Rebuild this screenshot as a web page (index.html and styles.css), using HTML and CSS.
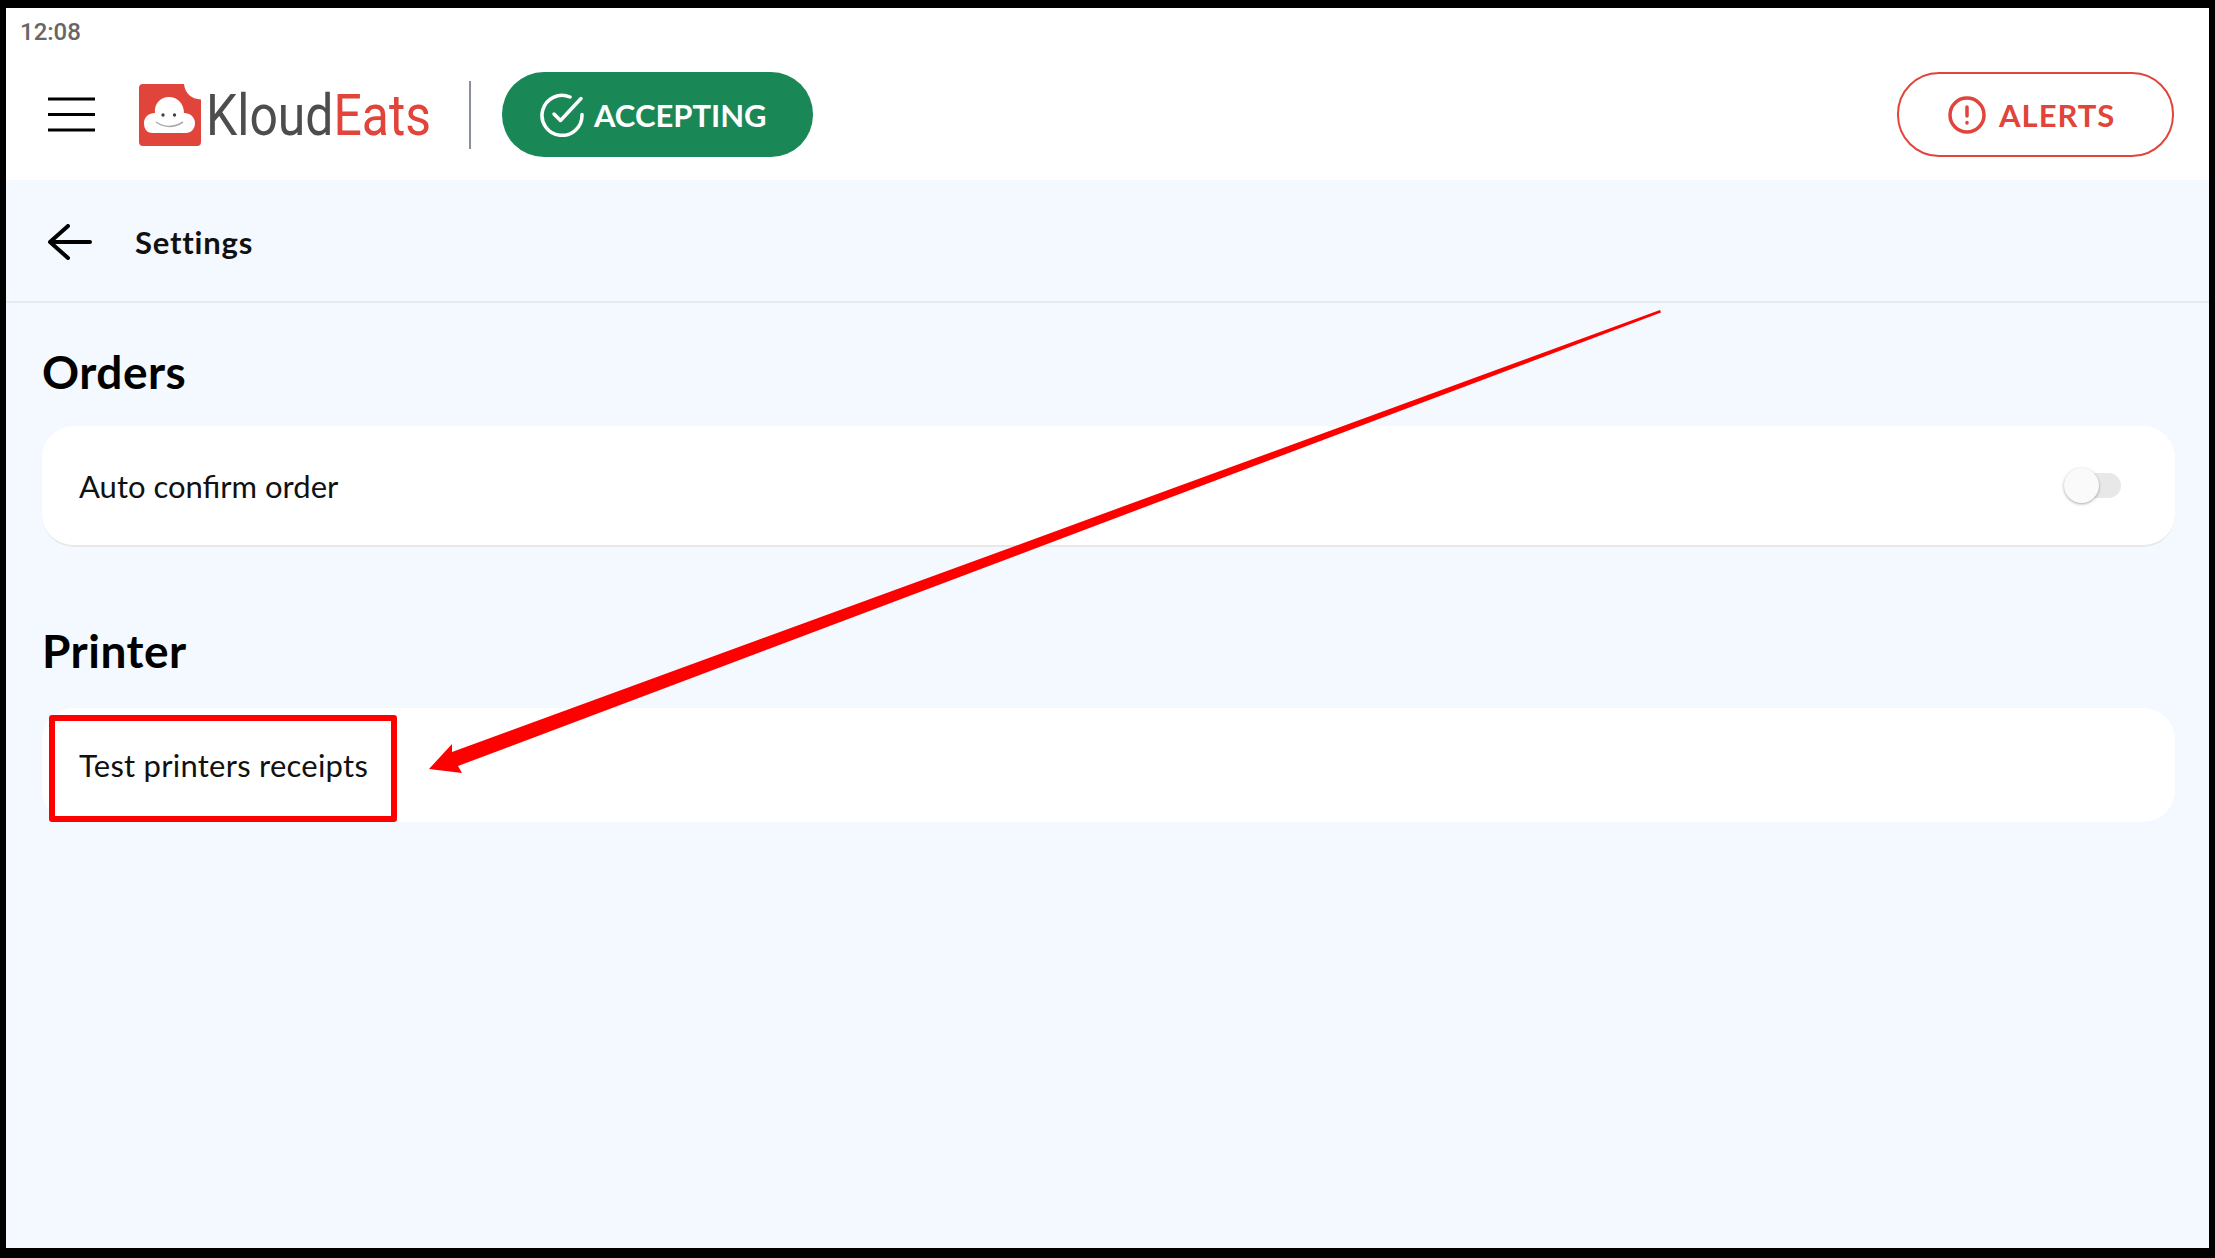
FILE: index.html
```html
<!DOCTYPE html>
<html>
	<head>
		<meta charset="utf-8">
		<title>KloudEats Settings</title>
		<link rel="stylesheet" href="styles.css">
	</head>
	<body>
		<div class="screen">
			<header class="top">
				<div class="status">12:08</div>
				<div class="toolbar">
					<svg class="menu" width="47" height="35" viewBox="0 0 47 35">
						<path d="M0 2H47M0 17.500H47M0 33H47" stroke="#000" stroke-width="3.200" fill="none"/>
					</svg>
					<svg class="logo" width="62" height="62" viewBox="0 0 62 62">
						<path d="M4 0H45C46 9 52 15 62 15.500V58Q62 62 58 62H4Q0 62 0 58V4Q0 0 4 0Z" fill="#e0443a"/>
						<path d="M14 49C7 49 5 44 5 39C5 33 10 29 16 29C15 20 21 13 30 13C39 13 45 20 45 29C51 29 56 33 56 39C56 45 52 49 47 49Z" fill="#fff"/>
						<circle cx="24" cy="31" r="1.700" fill="#444"/>
						<circle cx="35.500" cy="31" r="1.700" fill="#444"/>
						<path d="M17 38Q30 47 44 38" stroke="#aaa" stroke-width="1.500" fill="none"/>
					</svg>
					<div class="brand"><span class="brand-text">Kloud<span class="brand-red">Eats</span></span></div>
					<div class="divider"></div>
					<div class="pill accepting">
						<svg width="44" height="44" viewBox="0 0 44 44" fill="none" stroke="#fff" stroke-width="3.500" stroke-linecap="round" stroke-linejoin="round">
							<path d="M42 21.500A20 20 0 1 1 30 4"/>
							<path d="M14 21L20.500 27.500L41 5.500"/>
						</svg>
						<span>ACCEPTING</span>
					</div>
					<div class="pill alerts">
						<svg width="38" height="38" viewBox="0 0 38 38" fill="none" stroke="#e0443a" stroke-width="3.500" stroke-linecap="round">
							<circle cx="19" cy="19" r="17"/>
							<path d="M19 11V20"/>
							<path d="M19 26.500V27"/>
						</svg>
						<span>ALERTS</span>
					</div>
				</div>
			</header>

			<div class="subbar">
				<svg width="44" height="36" viewBox="0 0 44 36" fill="none" stroke="#000" stroke-width="4" stroke-linecap="round" stroke-linejoin="round">
					<path d="M42 18H2M20 2L2 18L20 34"/>
				</svg>
				<span class="subbar-title">Settings</span>
			</div>

			<main class="content">
				<h2 class="group-title">Orders</h2>
				<div class="card card-orders">
					<span>Auto confirm order</span>
					<div class="toggle"><div class="thumb"></div></div>
				</div>
				<h2 class="group-title group-printer">Printer</h2>
				<div class="card card-printer">
					<span>Test printers receipts</span>
				</div>
			</main>
		</div>

		<!-- annotation over the screenshot -->
		<div class="mark-box"></div>
		<svg class="mark-arrow" width="2215" height="1258" viewBox="0 0 2215 1258">
			<polygon points="1660,310 1661,312.500 458,766 462,773 429,769 452,744 452,752" fill="#f00"/>
		</svg>
	</body>
</html>
```

FILE: styles.css
```css
* {
	box-sizing: border-box;
}

html,
body {
	margin: 0;
	height: 1258px;
	overflow: hidden;
	background-color: #000;
}

body {
	padding: 8px 6px 10px 6px;
	font-family: "Lato", "Noto Sans", sans-serif;
	color: #111;
}

.screen {
	height: 1240px;
	display: flex;
	flex-direction: column;
	background-color: #f4f8ff;
}

.top {
	height: 172px;
	background-color: #fff;
}

.status {
	height: 64px;
	padding: 10px 0 0 14px;
	font-family: "Roboto", sans-serif;
	font-size: 24px;
	font-weight: 500;
	line-height: 28px;
	color: #666;
}

.toolbar {
	display: flex;
	align-items: center;
	height: 85px;
	padding-right: 35px;
}

.menu {
	margin-left: 42px;
}

.logo {
	margin-left: 44px;
}

.brand {
	width: 224px;
	margin-left: 5px;
}

.brand-text {
	display: block;
	font-family: "Roboto", sans-serif;
	font-size: 58px;
	line-height: 62px;
	color: #4d4d4d;
	white-space: nowrap;
	transform: scaleX(0.86);
	transform-origin: left center;
}

.brand-red {
	color: #e0443a;
}

.divider {
	width: 2px;
	height: 68px;
	margin-left: 39px;
	background-color: #8a90a0;
}

.pill {
	display: flex;
	align-items: center;
	height: 85px;
	border-radius: 42px;
	font-size: 31px;
	font-weight: 700;
}

.accepting {
	width: 311px;
	margin-left: 31px;
	padding-left: 38px;
	gap: 10px;
	background-color: #1a8856;
	color: #fff;
}

.alerts {
	width: 277px;
	margin-left: auto;
	padding-left: 49px;
	gap: 13px;
	letter-spacing: 1px;
	border: 2px solid #e0443a;
	color: #e0443a;
}

.subbar {
	display: flex;
	align-items: center;
	height: 123px;
	padding-left: 42px;
	padding-top: 2px;
	border-bottom: 2px solid #e7eaef;
}

.subbar-title {
	margin-left: 43px;
	font-size: 31px;
	font-weight: 700;
	letter-spacing: 0.800px;
	color: #111;
}

.content {
	padding: 0 34px 0 36px;
}

.group-title {
	margin: 0;
	height: 123px;
	padding-top: 43px;
	font-size: 46px;
	font-weight: 700;
	letter-spacing: 0.500px;
	line-height: 52px;
	color: #000;
}

.group-printer {
	height: 161px;
	padding-top: 78px;
}

.card {
	display: flex;
	align-items: center;
	justify-content: space-between;
	padding: 0 37px;
	background-color: #fff;
	border-radius: 32px;
	font-size: 31px;
	letter-spacing: 0.250px;
	color: #111;
}

.card-orders {
	height: 121px;
	letter-spacing: 0;
	border-bottom: 2px solid #e8e8e8;
}

.card-printer {
	height: 114px;
}

.toggle {
	position: relative;
	width: 55px;
	height: 25px;
	margin-right: 17px;
	border-radius: 13px;
	background-color: #e8e8e8;
}

.thumb {
	position: absolute;
	left: -2px;
	top: -5px;
	width: 35px;
	height: 35px;
	border-radius: 50%;
	background-color: #fafafa;
	box-shadow: 0 1px 3px rgba(0, 0, 0, 0.35);
}

.mark-box {
	position: absolute;
	left: 49px;
	top: 715px;
	width: 348px;
	height: 107px;
	border: 6px solid #f00;
	border-radius: 3px;
}

.mark-arrow {
	position: absolute;
	left: 0;
	top: 0;
}
```
